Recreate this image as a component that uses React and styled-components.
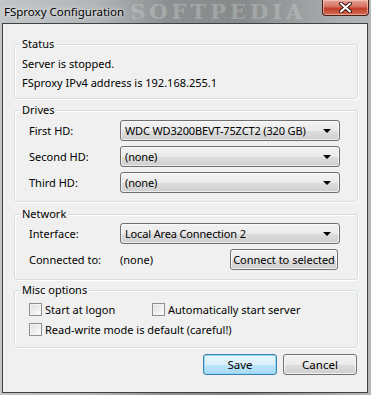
import React from "react"
import styled, { createGlobalStyle } from "styled-components"

const Global = createGlobalStyle`
  html, body { margin: 0; padding: 0; }
  body { background: #9c9f9f; font-family: "Noto Sans", "Open Sans", sans-serif; }
`

const Window = styled.div`
  width: 371px;
  height: 395px;
  display: flex;
  flex-direction: column;
  background: linear-gradient(90deg, #c2c6c6 0%, #b3b6b6 25%, #8d9090 45%, #878a8a 65%, #a2a5a5 85%, #b5b8b8 100%);
  overflow: hidden;
`

const TitleBar = styled.div`
  height: 23px;
  display: flex;
  align-items: flex-start;
`

const Title = styled.div`
  font-size: 11.5px;
  color: #000;
  padding: 4px 0 0 4px;
  white-space: nowrap;
  text-shadow: 0 0 6px #e6e8e8, 0 0 3px #e6e8e8;
`

const Watermark = styled.div`
  flex: 1;
  font-family: "DejaVu Serif", serif;
  font-weight: bold;
  font-size: 21px;
  letter-spacing: 4px;
  line-height: 23px;
  color: rgba(225, 228, 228, 0.3);
  padding-left: 6px;
  white-space: nowrap;
`

const CloseButton = styled.div`
  width: 45px;
  height: 15px;
  margin-right: 2px;
  border: 1px solid #4a1d18;
  border-top: none;
  border-radius: 0 0 4px 4px;
  background: linear-gradient(#e8a496 0%, #d5705f 45%, #c0402a 55%, #d26a50 100%);
  box-shadow: inset 0 0 0 1px rgba(255, 220, 210, 0.5);
  display: flex;
  align-items: center;
  justify-content: center;
`

const Client = styled.div`
  flex: 1;
  margin: 0 3px 2px 2px;
  background: #f0f0f0;
  border: 1px solid #3e4242;
  display: flex;
  flex-direction: column;
  padding-top: 20px;
  font-size: 11px;
  color: #000;
`

const Group = styled.div`
  position: relative;
  margin: 0 9px ${p => p.$after}px 11px;
  border: 1px solid #d5dfe5;
  border-radius: 3px;
  box-shadow: inset 1px 1px 0 #fff, 1px 1px 0 #fff;
  padding: ${p => p.$pad};
  display: flex;
  flex-direction: column;
`

const Legend = styled.div`
  position: absolute;
  top: -8px;
  left: 5px;
  padding: 0 2px;
  background: #f0f0f0;
  line-height: 14px;
`

const Line = styled.div`
  line-height: 19px;
  padding-left: 7px;
`

const Row = styled.div`
  display: flex;
  align-items: center;
  height: 21px;
  margin-top: ${p => p.$gap || 0}px;
`

const Label = styled.div`
  width: 105px;
  padding-left: 14px;
  flex-shrink: 0;
  box-sizing: border-box;
`

const Combo = styled.div`
  width: 220px;
  height: 21px;
  box-sizing: border-box;
  border: 1px solid #707070;
  border-radius: 3px;
  background: linear-gradient(#f2f2f2 0%, #ebebeb 50%, #dddddd 51%, #cfcfcf 100%);
  box-shadow: inset 0 0 0 1px rgba(255, 255, 255, 0.6);
  display: flex;
  align-items: center;
  padding: 0 8px 0 4px;
`

const ComboText = styled.div`
  flex: 1;
  white-space: nowrap;
  letter-spacing: -0.15px;
`

const Arrow = styled.div`
  width: 0;
  height: 0;
  border-left: 4px solid transparent;
  border-right: 4px solid transparent;
  border-top: 4px solid #000;
`

const Value = styled.div`
  flex: 1;
`

const PushButton = styled.div`
  width: ${p => p.$w}px;
  height: 21px;
  box-sizing: border-box;
  border: 1px solid ${p => (p.$default ? "#3c7fb1" : "#707070")};
  border-radius: 3px;
  background: ${p =>
    p.$default
      ? "linear-gradient(#eaf6fd 0%, #d9f0fc 50%, #bee6fd 51%, #a7d9f5 100%)"
      : "linear-gradient(#f2f2f2 0%, #ebebeb 50%, #dddddd 51%, #cfcfcf 100%)"};
  box-shadow: inset 0 0 0 1px ${p => (p.$default ? "#94d8fa" : "rgba(255,255,255,0.7)")};
  display: flex;
  align-items: center;
  justify-content: center;
  white-space: nowrap;
  font-size: ${p => p.$fs || 11.5}px;
  margin-right: ${p => p.$mr || 0}px;
`

const CheckRow = styled.div`
  display: flex;
  align-items: center;
  height: 20px;
  padding-left: 14px;
`

const CheckItem = styled.label`
  display: flex;
  align-items: center;
  width: ${p => p.$w || "auto"};
`

const Box = styled.span`
  width: 13px;
  height: 13px;
  box-sizing: border-box;
  border: 1px solid #8e8f8f;
  background: linear-gradient(135deg, #dcdcdc 0%, #f4f4f4 70%, #fff 100%);
  box-shadow: inset 0 0 0 1px #f4f4f4;
  margin-right: 3px;
  flex-shrink: 0;
`

const Footer = styled.div`
  display: flex;
  justify-content: flex-end;
  gap: 6px;
  margin: 0 10px 0 0;
`

const Checkbox = ({ label, w }) => (
  <CheckItem $w={w}>
    <Box />
    <span>{label}</span>
  </CheckItem>
)

const Select = ({ value }) => (
  <Combo>
    <ComboText>{value}</ComboText>
    <Arrow />
  </Combo>
)

export default function App() {
  return (
    <>
      <Global />
      <Window>
        <TitleBar>
          <Title>FSproxy Configuration</Title>
          <Watermark>SOFTPEDIA</Watermark>
          <CloseButton>
            <svg width="13" height="11" viewBox="0 0 13 11">
              <path d="M2 1.5 L11 9.5 M11 1.5 L2 9.5" stroke="#3a1510" strokeWidth="4" strokeLinecap="round" />
              <path d="M2 1.5 L11 9.5 M11 1.5 L2 9.5" stroke="#fff" strokeWidth="2" strokeLinecap="round" />
            </svg>
          </CloseButton>
        </TitleBar>
        <Client>
          <Group $after={11} $pad="9px 0 6px 0">
            <Legend>Status</Legend>
            <Line>Server is stopped.</Line>
            <Line>FSproxy IPv4 address is 192.168.255.1</Line>
          </Group>
          <Group $after={12} $pad="9px 0 8px 0">
            <Legend>Drives</Legend>
            <Row>
              <Label>First HD:</Label>
              <Select value="WDC WD3200BEVT-75ZCT2 (320 GB)" />
            </Row>
            <Row $gap={5}>
              <Label>Second HD:</Label>
              <Select value="(none)" />
            </Row>
            <Row $gap={5}>
              <Label>Third HD:</Label>
              <Select value="(none)" />
            </Row>
          </Group>
          <Group $after={10} $pad="8px 0 9px 0">
            <Legend>Network</Legend>
            <Row>
              <Label>Interface:</Label>
              <Select value="Local Area Connection 2" />
            </Row>
            <Row $gap={5}>
              <Label>Connected to:</Label>
              <Value>(none)</Value>
              <PushButton $w={108} $mr={19} $fs={11}>Connect to selected</PushButton>
            </Row>
          </Group>
          <Group $after={6} $pad="8px 0 8px 0">
            <Legend>Misc options</Legend>
            <CheckRow>
              <Checkbox label="Start at logon" w="123px" />
              <Checkbox label="Automatically start server" />
            </CheckRow>
            <CheckRow>
              <Checkbox label="Read-write mode is default (careful!)" />
            </CheckRow>
          </Group>
          <Footer>
            <PushButton $w={74} $default>Save</PushButton>
            <PushButton $w={74}>Cancel</PushButton>
          </Footer>
        </Client>
      </Window>
    </>
  )
}
